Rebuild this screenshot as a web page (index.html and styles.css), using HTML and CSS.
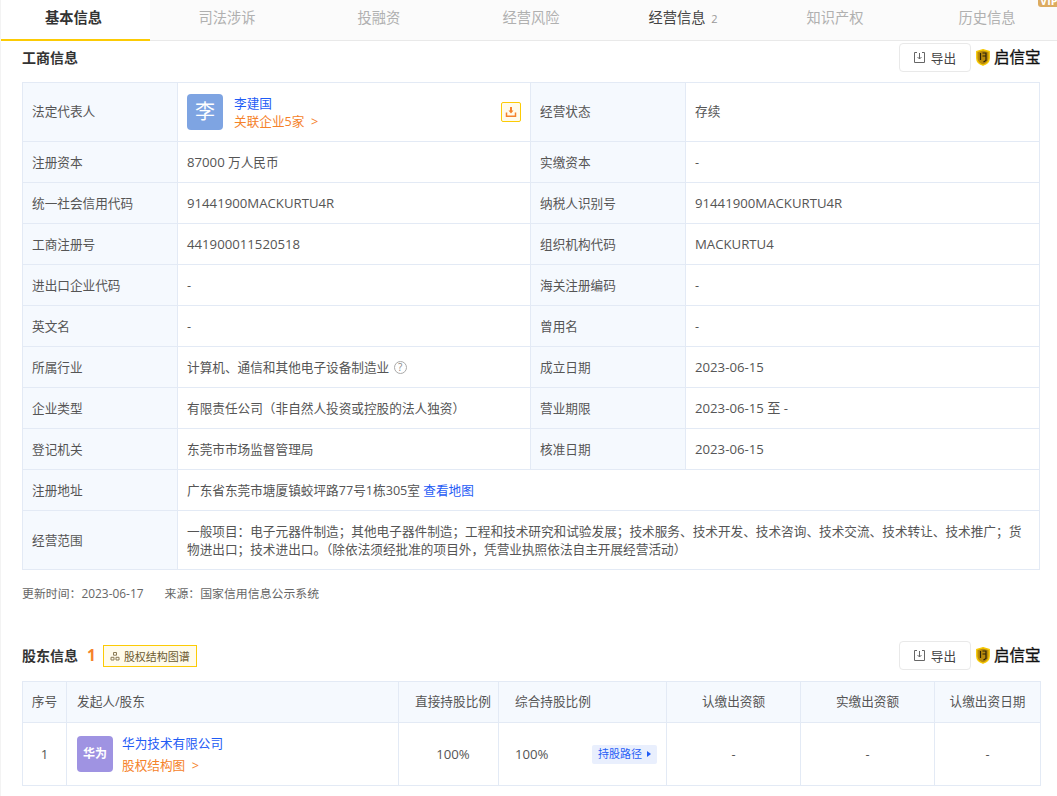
FILE: index.html
```html
<!DOCTYPE html>
<html lang="zh-CN">
<head>
    <meta charset="UTF-8">
    <title>基本信息</title>
    <link rel="stylesheet" href="styles.css">
</head>
<body>
    <div class="tabs">
        <div class="tab active">基本信息</div>
        <div class="tab">司法涉诉</div>
        <div class="tab">投融资</div>
        <div class="tab">经营风险</div>
        <div class="tab dark">经营信息 <span class="tab-num">2</span></div>
        <div class="tab">知识产权</div>
        <div class="tab">历史信息</div>
        <div class="vip">VIP</div>
    </div>

    <div class="section-head first">
        <h3 class="section-title">工商信息</h3>
        <div class="head-right">
            <div class="export-btn">
                <svg viewBox="0 0 11 11" width="11" height="11"><path d="M3 .5H.5v10h10V.5H8M5.500 1v6M3.500 5 5.500 7 7.500 5" fill="none" stroke="#666" stroke-width="1"/></svg>
                导出
            </div>
            <div class="brand">
                <svg viewBox="0 0 14 17" width="14" height="17"><path d="M7 .8 13.200 2.500V9C13.200 13 10 15.300 7 16.200 4 15.300 .8 13 .8 9V2.500Z" fill="#b98a0c" stroke="#f7c800" stroke-width="1.400"/><path d="M4.500 4V11M6.500 4H10V11.500L7.500 13M6.500 7H10" fill="none" stroke="#2a2208" stroke-width="1.200"/></svg>
                <span class="brand-name">启信宝</span>
            </div>
        </div>
    </div>

    <table class="info-table base-table">
        <colgroup>
            <col class="c-label"><col class="c-value"><col class="c-label"><col>
        </colgroup>
        <tr class="row-legal">
            <td class="label">法定代表人</td>
            <td>
                <div class="legal">
                    <div class="avatar blue">李</div>
                    <div class="legal-text">
                        <a class="link">李建国</a>
                        <a class="orange">关联企业5家 &nbsp;&gt;</a>
                    </div>
                    <div class="share-btn">
                        <svg viewBox="0 0 12 12" width="12" height="12"><path d="M5 1H7V4.500H8.500L6 7.500 3.500 4.500H5Z" fill="#f5822a"/><path d="M1.500 6.500V10.300H10.500V6.500" fill="none" stroke="#f5822a" stroke-width="1.500"/></svg>
                    </div>
                </div>
            </td>
            <td class="label">经营状态</td>
            <td>存续</td>
        </tr>
        <tr><td class="label">注册资本</td><td><span class="num">87000</span> 万人民币</td><td class="label">实缴资本</td><td>-</td></tr>
        <tr><td class="label">统一社会信用代码</td><td class="num">91441900MACKURTU4R</td><td class="label">纳税人识别号</td><td class="num">91441900MACKURTU4R</td></tr>
        <tr><td class="label">工商注册号</td><td class="num">441900011520518</td><td class="label">组织机构代码</td><td class="num">MACKURTU4</td></tr>
        <tr><td class="label">进出口企业代码</td><td>-</td><td class="label">海关注册编码</td><td>-</td></tr>
        <tr><td class="label">英文名</td><td>-</td><td class="label">曾用名</td><td>-</td></tr>
        <tr>
            <td class="label">所属行业</td>
            <td>计算机、通信和其他电子设备制造业 <span class="help">?</span></td>
            <td class="label">成立日期</td>
            <td class="num">2023-06-15</td>
        </tr>
        <tr><td class="label">企业类型</td><td>有限责任公司（非自然人投资或控股的法人独资）</td><td class="label">营业期限</td><td class="num">2023-06-15 至 -</td></tr>
        <tr><td class="label">登记机关</td><td>东莞市市场监督管理局</td><td class="label">核准日期</td><td class="num">2023-06-15</td></tr>
        <tr><td class="label">注册地址</td><td colspan="3">广东省东莞市塘厦镇蛟坪路77号1栋305室 <a class="link">查看地图</a></td></tr>
        <tr class="row-scope">
            <td class="label">经营范围</td>
            <td colspan="3">一般项目：电子元器件制造；其他电子器件制造；工程和技术研究和试验发展；技术服务、技术开发、技术咨询、技术交流、技术转让、技术推广；货物进出口；技术进出口。（除依法须经批准的项目外，凭营业执照依法自主开展经营活动）</td>
        </tr>
    </table>

    <div class="update-info">
        <span>更新时间：2023-06-17</span>
        <span>来源：国家信用信息公示系统</span>
    </div>

    <div class="section-head second">
        <div class="title-group">
            <h3 class="section-title">股东信息</h3>
            <span class="count">1</span>
            <div class="chart-btn">
                <svg viewBox="0 0 10 10" width="10" height="10"><path d="M3.500 1.500H6.500V4.200H3.500ZM1 6.300H4V9H1ZM6 6.300H9V9H6Z" fill="none" stroke="#8a7a55"/></svg>
                股权结构图谱
            </div>
        </div>
        <div class="head-right">
            <div class="export-btn">
                <svg viewBox="0 0 11 11" width="11" height="11"><path d="M3 .5H.5v10h10V.5H8M5.500 1v6M3.500 5 5.500 7 7.500 5" fill="none" stroke="#666" stroke-width="1"/></svg>
                导出
            </div>
            <div class="brand">
                <svg viewBox="0 0 14 17" width="14" height="17"><path d="M7 .8 13.200 2.500V9C13.200 13 10 15.300 7 16.200 4 15.300 .8 13 .8 9V2.500Z" fill="#b98a0c" stroke="#f7c800" stroke-width="1.400"/><path d="M4.500 4V11M6.500 4H10V11.500L7.500 13M6.500 7H10" fill="none" stroke="#2a2208" stroke-width="1.200"/></svg>
                <span class="brand-name">启信宝</span>
            </div>
        </div>
    </div>

    <table class="info-table holder-table">
        <colgroup>
            <col class="h-no"><col class="h-main"><col class="h-direct"><col class="h-total"><col class="h-money"><col class="h-money"><col class="h-date">
        </colgroup>
        <tr class="head-row">
            <td class="label center no-cell">序号</td>
            <td class="label main-cell">发起人/股东</td>
            <td class="label center direct-cell">直接持股比例</td>
            <td class="label total-cell">综合持股比例</td>
            <td class="label center">认缴出资额</td>
            <td class="label center">实缴出资额</td>
            <td class="label center">认缴出资日期</td>
        </tr>
        <tr class="holder-row">
            <td class="center no-cell num">1</td>
            <td class="main-cell">
                <div class="holder">
                    <div class="avatar purple">华为</div>
                    <div class="holder-text">
                        <a class="link">华为技术有限公司</a>
                        <a class="orange">股权结构图 &nbsp;&gt;</a>
                    </div>
                </div>
            </td>
            <td class="center direct-cell num">100%</td>
            <td class="total-cell">
                <div class="ratio">
                    <span class="num">100%</span>
                    <span class="path-tag">持股路径 <i class="arrow"></i></span>
                </div>
            </td>
            <td class="center">-</td>
            <td class="center">-</td>
            <td class="center">-</td>
        </tr>
    </table>
</body>
</html>
```

FILE: styles.css
```css
* {
    margin: 0;
    padding: 0;
    box-sizing: border-box;
}

html, body {
    height: 796px;
    overflow: hidden;
}

body {
    font-family: "Open Sans", "Noto Sans CJK SC", sans-serif;
    font-size: 12.65px;
    color: #555;
    background: white;
    border-left: 1px solid #f3f3f3;
    position: relative;
}

.num {
    font-size: 13.2px;
}

.tabs {
    display: flex;
    height: 41px;
    background: #fbfbfb;
    border-bottom: 1px solid #e9e9e9;
    position: relative;
}

.tab {
    flex: 0 0 152px;
    line-height: 36px;
    text-align: center;
    font-size: 14.25px;
    color: #b0b0b0;
}

.tab.active {
    flex-basis: 149px;
    height: 41px;
    margin-right: 1px;
    padding-right: 4px;
    background: white;
    color: #333;
    font-weight: 700;
    border-bottom: 2px solid #fccb05;
}

.tab.dark {
    color: #444;
}

.tab-num {
    font-size: 11px;
    color: #999;
    margin-left: 2px;
}

.vip {
    position: absolute;
    top: -6px;
    right: 0;
    width: 19px;
    height: 13px;
    background: #dcab60;
    border-radius: 3px 0 0 3px;
    color: white;
    font-size: 11px;
    line-height: 13px;
    padding-left: 2px;
    font-weight: 700;
    overflow: hidden;
}

.section-head {
    display: flex;
    justify-content: space-between;
    align-items: center;
    padding: 0 15px 0 21px;
}

.section-head.first {
    margin-top: 2px;
    margin-bottom: 10px;
}

.section-head.second {
    margin-top: 39px;
    margin-bottom: 11px;
}

.section-title {
    padding-bottom: 2px;
    font-size: 14px;
    font-weight: 700;
    color: #333;
}

.title-group {
    display: flex;
    align-items: center;
}

.count {
    padding-bottom: 2px;
    color: #f5822a;
    font-size: 15.5px;
    font-weight: 700;
    margin-left: 9px;
}

.chart-btn {
    display: flex;
    align-items: center;
    gap: 4px;
    height: 22px;
    margin-left: 7px;
    padding: 0 6px;
    font-size: 11px;
    color: #6b5a30;
    background: #fffbeb;
    border: 1px solid #fccb05;
}

.head-right {
    display: flex;
    align-items: center;
    gap: 5px;
}

.export-btn {
    display: flex;
    align-items: center;
    justify-content: center;
    gap: 6px;
    width: 72px;
    height: 29px;
    color: #444;
    background: white;
    border: 1px solid #e9e9e9;
    border-radius: 4px;
}

.brand {
    display: flex;
    align-items: center;
    gap: 4px;
    width: 66px;
}

.brand-name {
    font-size: 15.5px;
    font-weight: 400;
    -webkit-text-stroke: 0.3px #111;
    color: #111;
    line-height: 17px;
    white-space: nowrap;
}

.info-table {
    width: 1018px;
    margin-left: 21px;
    border-collapse: collapse;
    table-layout: fixed;
}

.info-table td {
    height: 41px;
    padding: 0 9px;
    border: 1px solid #e3eaf5;
    line-height: 18px;
}

.info-table .label {
    background: #f5f9fe;
    color: #555;
}

.info-table .center {
    text-align: center;
}

.c-label {
    width: 155px;
}

.c-value {
    width: 353px;
}

.base-table .row-legal td {
    height: 59px;
    padding-bottom: 2px;
}

.base-table .row-scope td {
    height: 59px;
}

.base-table .row-scope .label {
    padding-bottom: 1px;
}

.legal {
    display: flex;
    align-items: center;
    margin-bottom: -2px;
}

.avatar {
    display: flex;
    align-items: center;
    justify-content: center;
    flex-shrink: 0;
    width: 36px;
    height: 36px;
    border-radius: 4px;
    color: white;
}

.avatar.blue {
    background: #7ea4e2;
    font-size: 20px;
}

.avatar.purple {
    background: #9f93e2;
    font-size: 12px;
    font-weight: 700;
}

.legal-text {
    display: flex;
    flex-direction: column;
    margin-left: 11px;
    flex: 1;
}

.link {
    color: #1f5cf5;
}

.orange {
    color: #f5822a;
}

.share-btn {
    display: flex;
    align-items: center;
    justify-content: center;
    width: 20px;
    height: 20px;
    background: #fffbeb;
    border: 1px solid #fccb05;
    border-radius: 2px;
}

.help {
    display: inline-block;
    width: 13px;
    height: 13px;
    margin-left: 1px;
    border: 1px solid #aaa;
    border-radius: 50%;
    color: #888;
    font-size: 10px;
    line-height: 11px;
    text-align: center;
    vertical-align: 1px;
}

.update-info {
    display: flex;
    gap: 21px;
    margin: 14px 0 0 21px;
    font-size: 11.9px;
    line-height: 18px;
    color: #666;
}

.h-no {
    width: 44px;
}

.h-main {
    width: 332px;
}

.h-direct {
    width: 100px;
}

.h-total {
    width: 168px;
}

.h-money {
    width: 134px;
}

.h-date {
    width: 106px;
}

.holder-table .head-row td {
    padding-bottom: 2px;
}

.holder-table .no-cell {
    padding-left: 0;
    padding-right: 0;
}

.holder-table .main-cell {
    padding-left: 10px;
}

.holder-table .direct-cell {
    padding-left: 9px;
    padding-right: 0;
    white-space: nowrap;
}

.holder-table .total-cell {
    padding-left: 16px;
}

.holder-row td {
    height: 63px;
}

.holder {
    display: flex;
    align-items: center;
}

.holder-text {
    display: flex;
    flex-direction: column;
    gap: 4px;
    margin-left: 9px;
}

.ratio {
    display: flex;
    align-items: center;
    justify-content: space-between;
}

.path-tag {
    display: flex;
    align-items: center;
    height: 19px;
    padding: 0 6px;
    font-size: 11px;
    color: #1f5cf5;
    background: #e9effd;
    border-radius: 2px;
}

.arrow {
    width: 0;
    height: 0;
    margin-left: 5px;
    border-left: 4px solid #1f5cf5;
    border-top: 3px solid transparent;
    border-bottom: 3px solid transparent;
}
```
